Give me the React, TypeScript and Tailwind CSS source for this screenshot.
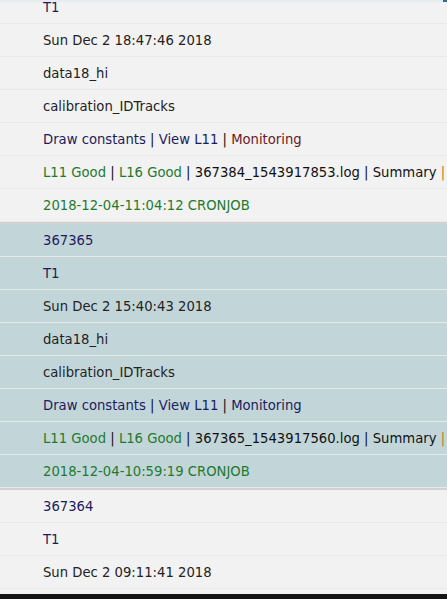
import React from 'react';

type Run = {
    run: string;
    date: string;
    log: string;
    cron: string;
    visited?: boolean;
};

const runs: Run[] = [
    { run: '367384', date: 'Sun Dec 2 18:47:46 2018', log: '367384_1543917853.log', cron: '2018-12-04-11:04:12 CRONJOB', visited: true },
    { run: '367365', date: 'Sun Dec 2 15:40:43 2018', log: '367365_1543917560.log', cron: '2018-12-04-10:59:19 CRONJOB' },
    { run: '367364', date: 'Sun Dec 2 09:11:41 2018', log: '367364_1543912201.log', cron: '2018-12-04-10:41:02 CRONJOB' },
];

const Sep = () => <span className="text-[#111]"> | </span>;

const Row = ({ children }: { children: React.ReactNode }) => (
    <div className="h-[33px] flex items-center pl-[43px] pt-[1px] border-b border-[#e9e9e9] overflow-hidden">
        <span className="whitespace-pre">{children}</span>
    </div>
);

const RunGroup = ({ r, alt }: { r: Run; alt: boolean }) => (
    <div className={`${alt ? 'bg-[#c2d6da]' : 'bg-[#f2f2f2]'} border-b-2 border-[#d2d2d2]`}>
        <Row><span className="text-[#1c1c5c]">{r.run}</span></Row>
        <Row><span className="text-[#1c1c5c]">T1</span></Row>
        <Row><span className="text-[#222]">{r.date}</span></Row>
        <Row><span className="text-[#222]">data18_hi</span></Row>
        <Row><span className="text-[#222]">calibration_IDTracks</span></Row>
        <Row>
            <span className="text-[#1c1c5c]">Draw constants</span>
            <Sep />
            <span className="text-[#1c1c5c]">View L11</span>
            <Sep />
            <span className={r.visited ? 'text-[#6a1a24]' : 'text-[#1c1c5c]'}>Monitoring</span>
        </Row>
        <Row>
            <span className="text-[#1f7a2e]">L11 Good</span>
            <Sep />
            <span className="text-[#1f7a2e]">L16 Good</span>
            <Sep />
            <span className="text-[#111]">{r.log}</span>
            <Sep />
            <span className="text-[#111]">Summary</span>
            <span className="text-[#c87818]"> | Histograms</span>
        </Row>
        <Row><span className="text-[#1f7a2e]">{r.cron}</span></Row>
    </div>
);

export default function App() {
    return (
        <div className="w-[447px] h-[599px] flex flex-col bg-[#f2f2f2] text-[13.2px] overflow-hidden" style={{ fontFamily: '"DejaVu Sans", Verdana, sans-serif' }}>
            {/* top strip */}
            <div className="h-[2px] shrink-0 flex justify-end bg-[#e6ebee]">
                <div className="w-[4px] h-[2px] bg-[#2b6a9e]" />
            </div>
            {/* run list, scrolled */}
            <div className="h-[592px] shrink-0 overflow-hidden">
                <div className="-mt-[44px]">
                    {runs.map((r, i) => (
                        <RunGroup key={r.run} r={r} alt={i % 2 === 1} />
                    ))}
                </div>
            </div>
            {/* bottom */}
            <div className="flex-1 bg-[#141414]" />
        </div>
    );
}
